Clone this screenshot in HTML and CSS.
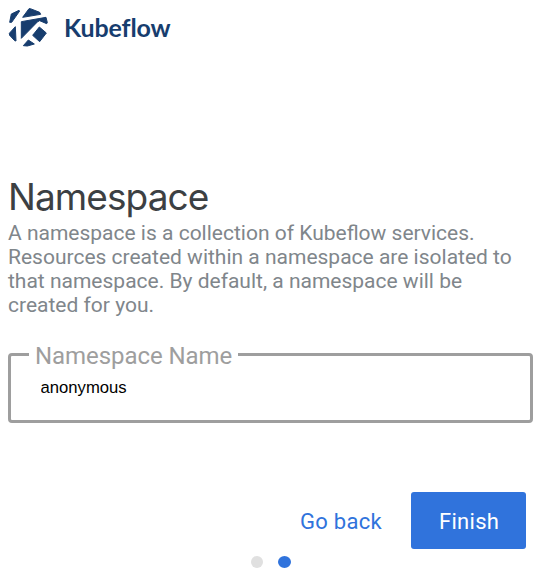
FILE: index.html
```html
<!DOCTYPE html>
<html lang="en">
<head>
<meta charset="utf-8">
<title>Kubeflow</title>
<link rel="stylesheet" href="styles.css">
</head>
<body>
<header class="brand">
  <svg class="mark" viewBox="0 0 126 126" aria-hidden="true">
    <path d="M13 24 36 13 38 15 14 49 8 49Z"/>
    <path d="M47 34 66 8 70 8 98 19 101 25Z"/>
    <path d="M43 47 117 34 121 50 119 53 98 44 92 47 43 97Z"/>
    <path d="M7 82 25 62 27 105 23 104 8 88Z"/>
    <path d="M97 63 118 81 98 107 77 88Z"/>
    <path d="M49 119 64 102 82 114 61 120Z"/>
  </svg>
  <span class="wordmark">Kubeflow</span>
</header>
<main>
  <h1>Namespace</h1>
  <p class="description">A namespace is a collection of Kubeflow services. Resources created within a namespace are isolated to that namespace. By default, a namespace will be created for you.</p>
  <fieldset class="field">
    <legend>Namespace Name</legend>
    <input class="value" type="text" value="anonymous" aria-label="Namespace Name">
  </fieldset>
  <div class="actions">
    <button class="button">Go back</button>
    <button class="button primary">Finish</button>
  </div>
  <div class="steps"><i class="dot"></i><i class="dot current"></i></div>
</main>
</body>
</html>
```
FILE: styles.css
```css
* { box-sizing: border-box; }
body { margin: 0; padding: 6px 7px 0 8px; background: #fff; font-family: Roboto, sans-serif; overflow: hidden; }
.brand { display: flex; align-items: center; height: 42px; gap: 15px; }
.mark { width: 42px; height: 42px; margin-left: -1px; fill: #173d6e; stroke: #173d6e; stroke-width: 3; stroke-linejoin: round; }
.wordmark { font: 700 25px/40px Lato, sans-serif; color: #173d6e; letter-spacing: -0.1px; }
h1 { margin: 126px 0 0; font: 400 37px/46px Inter, sans-serif; color: #3c4043; letter-spacing: -0.92px; }
.description { margin: 1px 0 0; font-size: 21px; line-height: 24px; color: #80868b; }
.field { margin: 25px 0 0; padding: 0 17px; height: 81px; border: 3px solid #9e9e9e; border-radius: 4px; }
.field legend { height: 25px; padding: 0 6px; margin-left: 1px; font-size: 24px; line-height: 28px; letter-spacing: -0.06px; color: #9e9e9e; }
.value { display: block; width: 100%; margin: 10px 0 0; padding: 0 12.5px; border: 0; outline: 0; font: 16.67px/22px "Liberation Sans", sans-serif; color: #000; background: none; }
.actions { display: flex; justify-content: flex-end; gap: 1px; margin: 69px 7px 0 0; }
.button { height: 57px; padding: 2px 28px 0; border: 0; border-radius: 3px; background: none; color: #3073dc; font: 22px/55px Roboto, sans-serif; letter-spacing: 0.3px; }
.primary { width: 115px; background: #3073dc; color: #fff; }
.steps { display: flex; justify-content: center; gap: 15px; margin-top: 7px; }
.dot { width: 12px; height: 12px; border-radius: 50%; background: #e0e0e0; }
.current { width: 13px; background: #3073dc; }
```
